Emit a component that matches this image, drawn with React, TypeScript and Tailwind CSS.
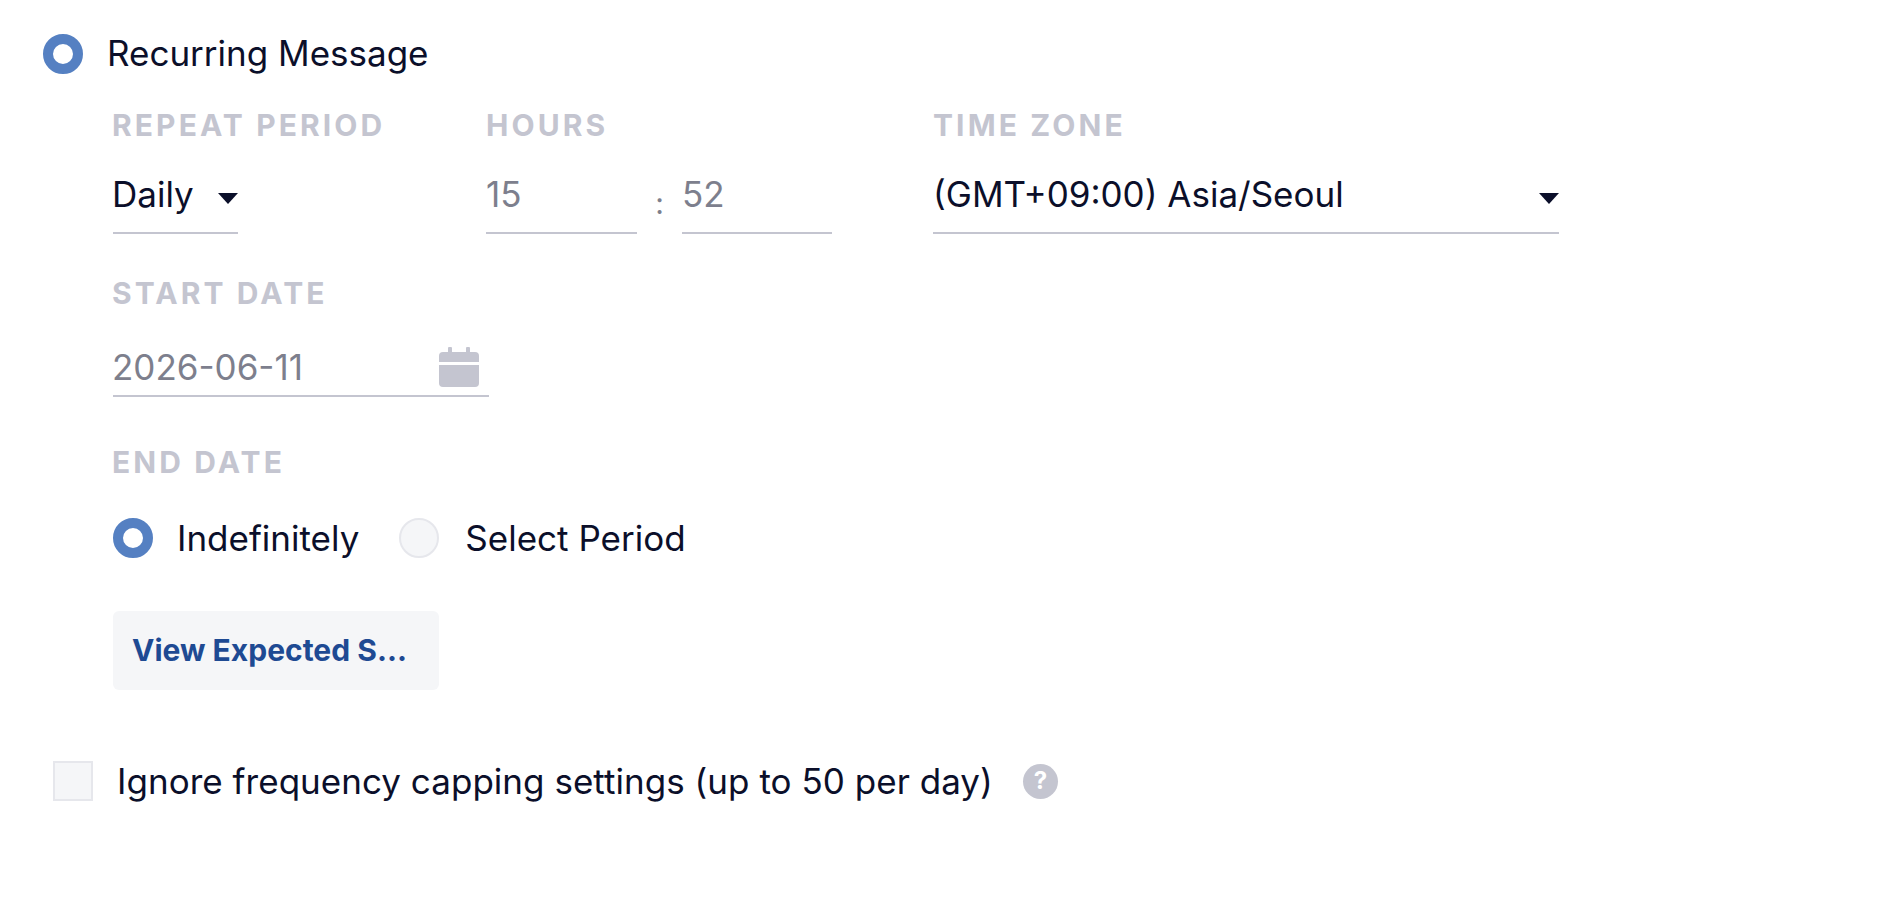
function Radio({ checked }: { checked?: boolean }) {
  if (checked) {
    return <div className="h-[40px] w-[40px] shrink-0 rounded-full border-[10px] border-[#5580c2] bg-white" />;
  }
  return <div className="h-[40px] w-[40px] shrink-0 rounded-full border-2 border-[#e6e7ec] bg-[#f5f6f8]" />;
}

function Label({ children }: { children: string }) {
  return <div className="h-[28px] text-[30px] leading-[28px] font-bold tracking-[3.1px] text-[#c4c5d0]">{children}</div>;
}

function Caret() {
  return (
    <svg width="20" height="11" viewBox="0 0 20 11" className="shrink-0">
      <path d="M0 0H20L10 11Z" fill="#0b0f2a" />
    </svg>
  );
}

function CalendarIcon() {
  return (
    <svg width="40" height="40" viewBox="0 0 40 40" className="mt-[2px] shrink-0">
      <rect x="9" y="0" width="4" height="8" rx="1" fill="#c4c5d0" />
      <rect x="27" y="0" width="4" height="8" rx="1" fill="#c4c5d0" />
      <path d="M4 5H36A4 4 0 0 1 40 9V15H0V9A4 4 0 0 1 4 5Z" fill="#c4c5d0" />
      <path d="M0 18H40V36A4 4 0 0 1 36 40H4A4 4 0 0 1 0 36Z" fill="#c4c5d0" />
    </svg>
  );
}

export default function App() {
  return (
    <div className="h-[904px] overflow-hidden bg-white pl-[43px] pt-[34px] font-['Inter',sans-serif] text-[#0b0f2a]">
      <div className="flex h-[40px] items-center gap-[24px]">
        <Radio checked />
        <span className="-mt-[2px] text-[35px] leading-[40px]">Recurring Message</span>
      </div>

      <div className="ml-[70px]">
        <div className="mt-[37px] flex">
          <div className="w-[373px]">
            <div className="-ml-[1px]"><Label>REPEAT PERIOD</Label></div>
            <div className="mt-[33px] flex h-[62px] w-[125px] items-start justify-between border-b-2 border-[#c4c5d0]">
              <span className="-ml-[1px] text-[35px] leading-[44px]">Daily</span>
              <span className="mt-[21px]"><Caret /></span>
            </div>
          </div>
          <div className="w-[447px]">
            <Label>HOURS</Label>
            <div className="mt-[33px] flex items-start">
              <div className="h-[62px] w-[151px] border-b-2 border-[#c4c5d0] text-[35px] leading-[44px] text-[#7d7f8d]">15</div>
              <div className="flex w-[45px] justify-center pt-[9px] text-[30px] leading-[44px] text-[#7d7f8d]">:</div>
              <div className="h-[62px] w-[150px] border-b-2 border-[#c4c5d0] text-[35px] leading-[44px] text-[#7d7f8d]">52</div>
            </div>
          </div>
          <div className="w-[626px]">
            <Label>TIME ZONE</Label>
            <div className="mt-[33px] flex h-[62px] items-start justify-between border-b-2 border-[#c4c5d0]">
              <span className="text-[35px] leading-[44px]">(GMT+09:00) Asia/Seoul</span>
              <span className="mt-[21px]"><Caret /></span>
            </div>
          </div>
        </div>

        <div className="mt-[45px]">
          <div className="-ml-[1px]"><Label>START DATE</Label></div>
          <div className="mt-[38px] flex h-[52px] w-[376px] items-start justify-between border-b-2 border-[#c4c5d0] pr-[10px]">
            <span className="-ml-[1px] text-[35px] leading-[44px] text-[#7d7f8d]">2026-06-11</span>
            <CalendarIcon />
          </div>
        </div>

        <div className="mt-[51px]">
          <div className="-ml-[1px]"><Label>END DATE</Label></div>
          <div className="mt-[42px] flex h-[40px] items-center text-[35px] leading-[40px]">
            <Radio checked />
            <span className="ml-[24px]">Indefinitely</span>
            <span className="ml-[40px]"><Radio /></span>
            <span className="ml-[26px]">Select Period</span>
          </div>
        </div>

        <button className="mt-[53px] flex h-[79px] w-[326px] items-center rounded-[6px] bg-[#f5f6f8] pl-[19px] text-[30px] font-bold text-[#1e4a93]">
          View Expected S...
        </button>
      </div>

      <div className="mt-[71px] ml-[10px] flex h-[40px] items-center">
        <div className="h-[40px] w-[40px] shrink-0 border-2 border-[#e6e7ec] bg-[#f5f6f8]" />
        <span className="ml-[24px] text-[35px] leading-[40px] tracking-[0.03px]">Ignore frequency capping settings (up to 50 per day)</span>
        <span className="ml-[30px] flex h-[35px] w-[35px] items-center justify-center rounded-full bg-[#c4c5d0] text-[24px] font-bold leading-none text-white">?</span>
      </div>
    </div>
  );
}
